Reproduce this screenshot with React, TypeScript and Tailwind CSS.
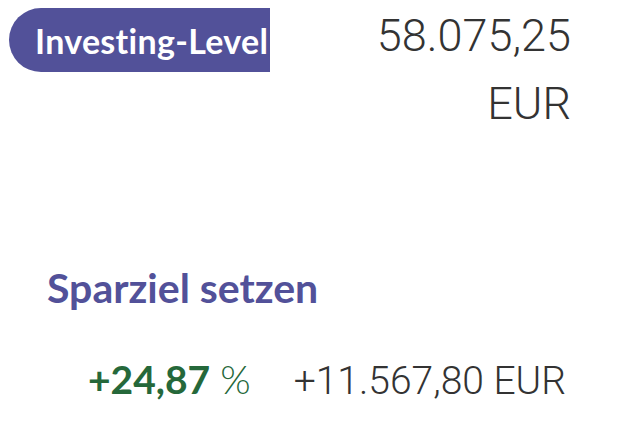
import React from "react";

const brand = "'Lato', 'Liberation Sans', sans-serif";
const nums = "'Roboto', 'Liberation Sans', sans-serif";

export default function App() {
  return (
    <div className="w-[630px] h-[423px] bg-white overflow-hidden">
      <div className="flex items-start justify-between">
        <div
          className="mt-[8px] ml-[9px] h-[64px] w-[261px] flex items-center pl-[26px] rounded-l-full bg-[#525199] overflow-hidden whitespace-nowrap"
        >
          <span className="text-[34px] tracking-[0.3px] font-bold text-white" style={{ fontFamily: brand }}>
            Investing-Level
          </span>
        </div>
        <div
          className="mt-[2px] mr-[59px] text-right text-[45px] leading-[68px] font-light text-[#333333]"
          style={{ fontFamily: nums }}
        >
          <div>58.075,25</div>
          <div>EUR</div>
        </div>
      </div>

      <div
        className="mt-[126px] pl-[47px] text-[41px] leading-[48px] font-bold text-[#525199]"
        style={{ fontFamily: brand }}
      >
        Sparziel setzen
      </div>

      <div className="mt-[43px] pl-[88px] flex items-baseline gap-[43px] leading-[48px]">
        <span className="text-[#25683a] text-[39px]" style={{ fontFamily: brand }}>
          <span className="font-bold">+24,87</span>{" "}
          <span className="font-light">%</span>
        </span>
        <span className="text-[#333333] text-[39px] font-light" style={{ fontFamily: nums }}>
          +11.567,80 EUR
        </span>
      </div>
    </div>
  );
}
